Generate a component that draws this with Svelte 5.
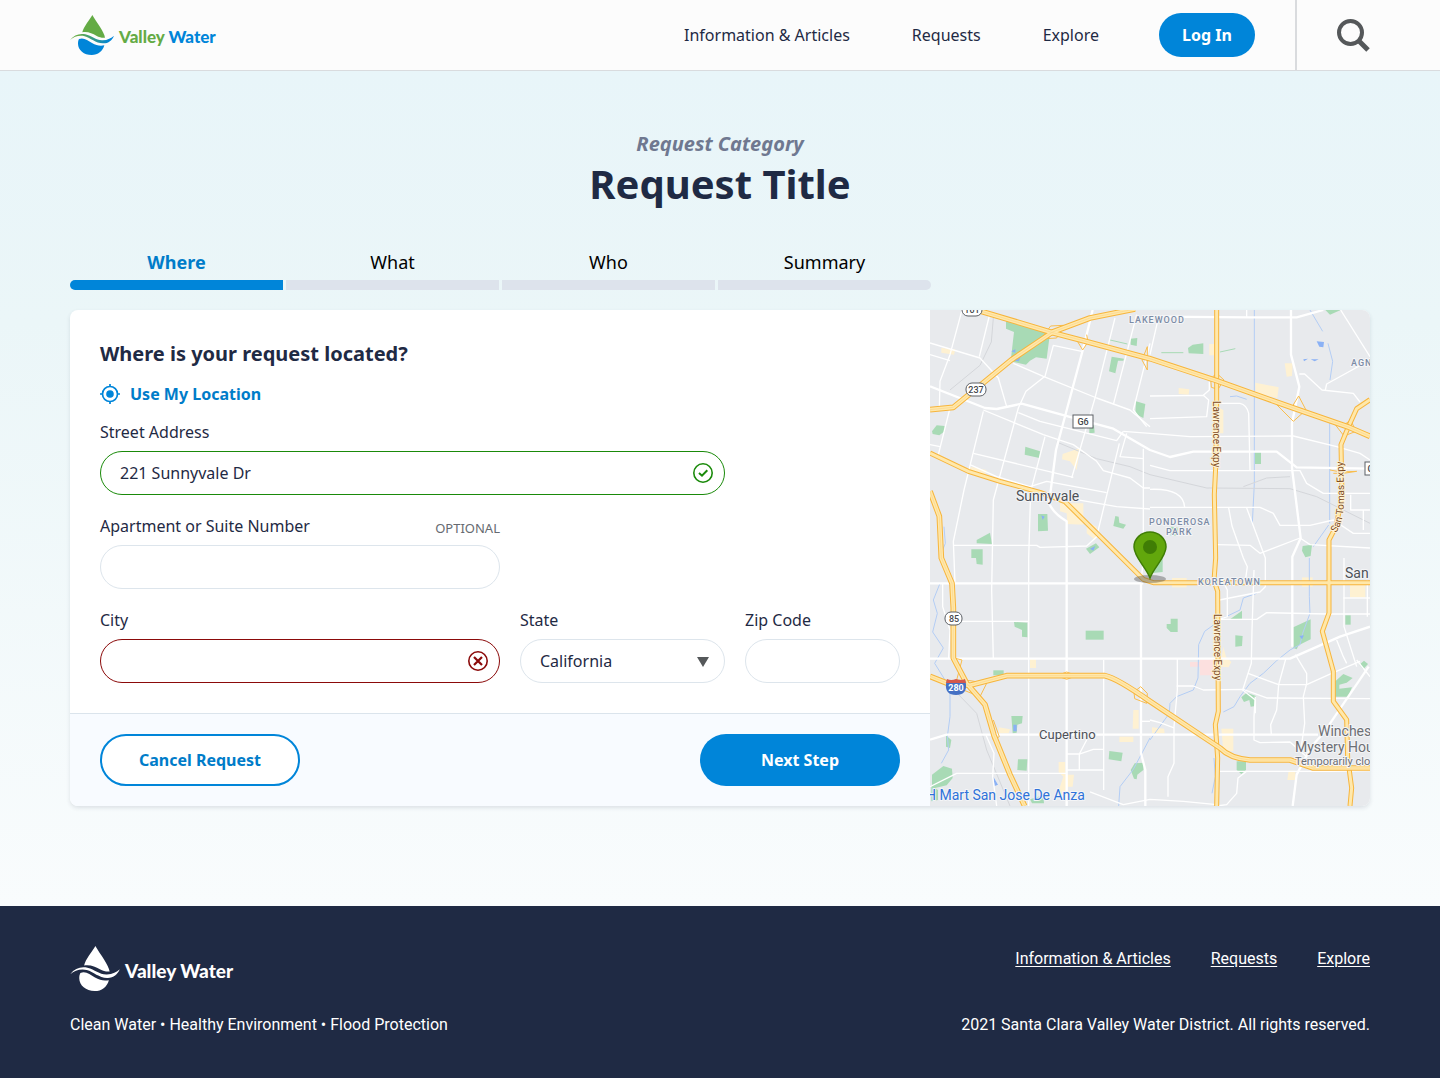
<script>
    const navLinks = ["Information & Articles", "Requests", "Explore"];
    const steps = ["Where", "What", "Who", "Summary"];
    const states = ["California", "Nevada", "Oregon"];

    let current = $state(0);
    let street = $state("221 Sunnyvale Dr");
    let suite = $state("");
    let city = $state("");
    let region = $state("California");
    let zip = $state("");

    // map shapes are on a 1320 x 1488 grid
    const parks = [
        "M228 34 L360 70 L350 146 L318 142 L300 152 L288 164 L242 154 L252 66 L228 56Z",
        "M545 140 L582 146 L580 152 L564 152 L556 190 L537 184Z",
        "M602 86 L622 84 L620 108 L602 104Z",
        "M286 410 L330 424 L328 444 L284 434Z",
        "M618 274 L646 282 L640 324 L616 312Z",
        "M6 364 L20 346 L44 348 L44 364 L28 376 L8 372Z",
        "M478 350 L492 346 L494 368 L478 370Z",
        "M324 612 L352 612 L354 662 L324 664Z",
        "M556 618 L566 620 L568 638 L588 644 L580 656 L550 648Z",
        "M140 690 L180 668 L186 702 L140 700Z",
        "M124 718 L158 718 L158 744 L158 764 L140 762 L138 744 L124 744Z",
        "M468 716 L498 700 L508 712 L480 732Z",
        "M252 936 L292 938 L292 982 L276 980 L276 960 L254 950Z",
        "M467 962 H521 V989 H467Z",
        "M190 1081 H221 V1096 H190Z",
        "M244 1218 H278 L276 1240 L262 1244 L260 1268 L248 1270Z",
        "M264 1348 L292 1348 L290 1382 L262 1380Z",
        "M538 1323 L578 1328 L574 1354 L536 1348Z",
        "M614 1360 L642 1358 L640 1380 L622 1394 L620 1408 L612 1406 L602 1380Z",
        "M6 1394 L40 1368 L66 1376 L68 1404 L50 1426 L6 1436Z",
        "M48 1276 L64 1290 L60 1314 L48 1310Z",
        "M4 1426 L24 1440 L24 1470 L4 1474Z",
        "M300 1468 L340 1456 L342 1480 L306 1480Z",
        "M774 114 L788 104 L820 100 L820 132 L776 130Z",
        "M975 426 H993 V462 H975Z",
        "M1186 0 H1232 L1200 14Z",
        "M1118 708 L1146 704 L1142 738 L1126 742 L1116 722Z",
        "M722 926 H743 V966 H722 L710 954 V942 H722Z",
        "M916 976 L938 978 L936 1008 L916 1010Z",
        "M1090 952 L1142 928 V988 L1106 1006 L1100 1018 L1090 1014Z",
        "M900 928 L936 902 L936 926Z",
        "M1246 916 H1262 V944 H1246Z",
        "M934 1162 L950 1148 L978 1158 L976 1188 L962 1190 L958 1170 L942 1176Z",
        "M1288 1064 L1302 1052 L1314 1062 L1300 1078Z",
        "M1216 1114 L1240 1092 L1268 1104 L1250 1118 L1228 1124 L1228 1136 L1266 1132 L1254 1160 L1216 1160Z",
        "M920 1354 H948 V1380 L934 1392 L920 1380Z",
        "M660 744 H698 V786 L660 790Z",
        "M722 650 L742 652 L746 676 L722 678Z",
    ];

    const blocks = [
        "M34 114 L76 118 L72 134 L34 128Z",
        "M398 432 L450 414 L440 480 L420 454 L396 448Z",
        "M390 580 L460 580 L460 644 L412 642 L410 610 L390 604Z",
        "M470 636 L500 650 L496 690 L470 670Z",
        "M120 470 L170 480 L166 492 L124 490Z",
        "M206 1252 L240 1258 L236 1270 L206 1270Z",
        "M300 1046 H318 V1074 H300Z",
        "M610 1200 H626 V1256 H608Z",
        "M568 1280 H610 V1296 H568Z",
        "M386 1356 H406 V1394 H432 L428 1430 H414 L412 1470 H390 V1430 L400 1400 L386 1386Z",
        "M838 102 H856 V136 H838Z",
        "M976 218 L1046 232 L1042 264 L976 248Z",
        "M1064 160 L1088 160 L1086 198 L1070 200Z",
        "M746 234 L778 238 L776 254 L746 252Z",
        "M868 294 L880 300 L880 370 L868 370Z",
        "M1260 824 H1306 V862 H1260Z",
        "M880 1010 L888 1040 L904 1056 L896 1072 L870 1070Z",
        "M874 1256 H910 V1324 H880Z",
        "M1076 1382 H1096 V1410 H1072Z",
        "M666 1252 L702 1256 L704 1270 L666 1270Z",
        "M726 804 H770 V832 H726Z",
        "M1116 802 H1148 V830 H1116Z",
    ];

    const water = [
        "M973 0 V520 L967 640",
        "M1199 340 V640",
        "M1140 0 L1178 64",
        "M1194 100 L1208 154 L1200 210",
        "M900 260 L920 258 L950 268",
        "M1138 744 V860 L1140 910 L1118 970 L1110 1004 L1080 1020 L1040 1052 L1000 1090 L960 1120 L930 1160 L912 1190 L880 1206",
        "M980 850 L940 864 L930 900 L880 924 L824 964 L806 1004 L804 1104 L790 1140 L740 1160 L720 1180 L718 1210 L660 1290",
        "M30 820 L10 870 L22 910 L8 966 L40 1014 L14 1060 L60 1134 L60 1220 L52 1280 L56 1320 L34 1360",
        "M660 1284 L610 1378 L570 1430 L566 1488",
        "M42 650 L46 700 L30 740",
        "M1196 645 L1150 710",
        "M852 1344 L856 1400 L846 1450",
    ];

    const rails = [
        "M190 24 L184 96 L150 166 L60 240",
        "M380 396 L500 446 L600 470 L660 494 L830 534 L1080 536 L1160 560 L1320 640",
        "M940 530 L1010 504 L1080 500",
        "M80 1148 L140 1210 L170 1320 L240 1488",
    ];

    const streets = [
        "M96 0 L60 134 L30 214 L28 300",
        "M180 9 L148 140",
        "M0 99 L150 144 L205 204 L230 290",
        "M0 134 L60 152",
        "M60 294 L25 434",
        "M0 404 L30 410",
        "M160 304 L102 540 L70 694 L75 820",
        "M250 160 L340 199 L500 264 L600 300 L660 350",
        "M455 124 L370 106 L345 199 L288 244 L265 294 L190 570 L185 840 L190 1046",
        "M555 24 L495 264 L425 504",
        "M620 14 L550 284",
        "M660 100 L610 300 L650 350",
        "M160 300 L340 374 L430 404 L500 454 L520 482 L600 504 L640 534 H660",
        "M345 380 L302 544 L296 744 V1488",
        "M130 430 L430 502",
        "M120 464 L200 500 L300 530 L350 514 L530 548",
        "M265 308 L330 334 L560 392 L580 364",
        "M590 370 L570 440 L640 446",
        "M568 400 L500 680 L470 708 L330 712 L320 706 H70",
        "M440 569 L560 590 L660 597",
        "M640 416 V744 L633 820",
        "M580 364 L660 370 L780 380 L1090 378 L1220 410 L1290 430 L1320 450",
        "M95 934 H296",
        "M38 820 V890 L60 960 L56 1046",
        "M521 1050 V1440",
        "M410 1332 H450 L490 1318 H521",
        "M448 1380 V1332 L470 1290",
        "M410 1380 H521",
        "M0 1430 L80 1390 H410",
        "M168 1276 L192 1330 L188 1400 L200 1488",
        "M480 1446 L580 1484 L660 1468 L760 1474 L860 1484",
        "M633 1234 H660",
        "M660 134 L686 20",
        "M660 258 L820 256 L836 270 L830 320 L660 326",
        "M820 256 L838 240 V216",
        "M860 280 H930 Q950 284 956 310 L960 480",
        "M660 466 L720 482 H1110 L1130 520 L1180 550 H1320",
        "M660 538 Q760 534 764 592",
        "M660 592 H990 L1030 610 L1050 646 H1140 L1210 630 L1270 670 H1320",
        "M950 594 L1006 744 V830 L990 846 L868 870",
        "M896 594 L906 648 L940 744 L952 770 L946 812",
        "M860 704 L960 706 L990 730 L1110 684 L1140 704 L1320 714",
        "M1108 192 L1124 192 L1176 240 L1270 250 L1290 276",
        "M1186 240 L1190 222 L1320 150",
        "M1232 0 L1320 140",
        "M950 0 V24",
        "M1262 554 V600 H1320",
        "M1300 600 V660",
        "M1242 744 V950 L1280 1070",
        "M1312 810 V920",
        "M1240 864 H1320",
        "M972 780 L966 960 L964 1060 L938 1140 L976 1170 V1210",
        "M870 928 H980 L1010 908 L1190 912 H1320",
        "M860 816 H880 L892 840 V920 L864 930",
        "M1068 1044 L1046 1124 L1040 1200 L1022 1244 L1024 1274",
        "M954 1090 L1046 1124 H1130 L1210 1088 L1290 1054",
        "M1096 1034 L1130 1090 V1120 L1120 1160 L1124 1240 L1114 1310",
        "M740 1128 H790 L820 1140 L940 1138 L1010 1164 L1320 1166",
        "M742 1046 V1140 L732 1250 V1360 L714 1400 V1460",
        "M976 1160 L972 1220 V1290 L990 1298 L1080 1296 L1130 1340",
        "M1220 990 L1240 1040 L1250 1060",
        "M1280 1050 L1320 1100",
        "M860 1384 H1200 L1320 1382",
        "M950 1384 L924 1404 L920 1450 L890 1484 L860 1488",
        "M660 1230 L690 1238 L732 1254",
    ];

    const avenues = [
        "M0 229 L165 294 L200 297 L275 281 L430 324 L550 356 L660 420 L720 441 L790 425 H1040 L1100 472 L1320 476",
        "M488 0 L460 114 L378 420 L357 580 Q370 610 410 634 V1488",
        "M680 20 L960 22 H1100 L1180 0",
        "M1083 0 V134 L1108 230 L1086 340 V474 L1112 684 L1087 740 V1010",
        "M0 820 H640",
        "M0 1046 H1080 L1230 980 L1320 950",
        "M0 1289 L50 1274 H1164",
        "M633 820 V1330 L646 1380 V1488",
        "M1316 1070 L1180 1270 L1144 1310 L1100 1394 L1088 1488",
    ];

    const expressways = [
        "M860 0 V274 L857 474 L853 554 L857 744 L852 812 L863 844 L865 1204 L856 1244 L863 1344 L860 1488",
        "M1320 269 L1280 296 L1255 351 L1233 404 L1236 560 L1218 650 L1197 690 V909 L1177 964 L1210 1084 V1174 L1250 1229 L1253 1344 L1265 1434 L1260 1488",
        "M0 429 L115 484 L210 514 L330 547 L405 575 L500 669 L640 808 L670 818 H1320",
    ];

    const freeways = [
        "M140 0 L368 68 L460 92 L660 146 L860 212 L1090 294 L1255 351 L1320 379",
        "M0 299 L70 292 L245 149 L368 66 L480 24 L615 -3",
        "M0 544 L28 619 L34 744 L66 820 L70 894 V1044 L110 1120 L165 1184 L192 1276 L240 1394 L284 1488",
        "M0 1099 L50 1119 L120 1126 L230 1097 H525 Q560 1104 660 1174 L870 1314 Q900 1345 960 1350 H1080 L1150 1374 H1320",
    ];

    const ramps = [
        "M338 80 L362 48 L400 46 L380 84 L346 86Z",
        "M440 90 L458 120 L474 96 L470 74",
        "M640 140 L652 110 L652 180 L636 150Z",
        "M842 206 L860 190 L882 210 L864 238 L844 232Z",
        "M1040 284 L1084 294 L1106 258 L1128 300 L1090 334Z",
        "M1208 334 L1246 342 L1262 330 L1278 364 L1242 378Z",
        "M1200 480 L1232 486 L1280 484 L1240 490 L1210 490",
        "M72 1044 L96 1050 L80 1110 L120 1112 L170 1120 L150 1160 L100 1140",
        "M380 1097 L410 1086 L440 1097 L410 1108Z",
        "M612 1146 L632 1130 L652 1150 L650 1180 L614 1166Z",
        "M182 1250 L190 1290 L208 1280 L190 1230",
    ];
</script>

{#snippet logoMark()}
    <path
        class="drop"
        d="M97 45 C90 58 70 81 67 97 C84 94 97 101 109 107 C118 112 127 114 135 113 C133 96 109 66 97 45Z"
    />
    <path
        class="wave"
        d="M30 120 C42 105 58 99 76 103 C96 108 108 122 128 121 C143 120 154 114 162 107 C156 121 146 130 130 130 C108 131 92 114 74 109 C58 105 42 110 30 120Z"
    />
    <path
        class="pool"
        d="M57 117 C71 111 83 121 96 129 C109 137 121 138 133 136 C128 154 114 165 95 165 C72 165 54 150 54 131 C54 125 55 121 57 117Z"
    />
{/snippet}

<header class="header">
    <div class="header-inner">
        <a class="logo" href="#home">
            <svg viewBox="30 45 132 120" width="44" height="40" aria-hidden="true">
                <defs>
                    <linearGradient id="wave-fill">
                        <stop offset="0.2" stop-color="#64ab45" />
                        <stop offset="0.9" stop-color="#0085d9" />
                    </linearGradient>
                </defs>
                {@render logoMark()}
            </svg>
            <span class="logo-text">Valley <span class="blue">Water</span></span>
        </a>
        <nav class="nav">
            {#each navLinks as link}
                <a href="#{link}">{link}</a>
            {/each}
        </nav>
        <button class="btn login">Log In</button>
        <button class="search" aria-label="Search">
            <svg viewBox="0 0 33 33" width="33" height="33">
                <circle cx="13.5" cy="13.5" r="11.5" fill="none" stroke="#55585a" stroke-width="4" />
                <path d="M21.5 21.5 L31 31" stroke="#55585a" stroke-width="5" />
            </svg>
        </button>
    </div>
</header>

<main class="main">
    <p class="category">Request Category</p>
    <h1>Request Title</h1>

    <ol class="steps">
        {#each steps as step, i}
            <li class:active={i === current}>
                <button onclick={() => (current = i)}>{step}</button>
                <div class="bar"></div>
            </li>
        {/each}
    </ol>

    <div class="card">
        <form class="form" onsubmit={(e) => e.preventDefault()}>
            <div class="fields">
                <h2>Where is your request located?</h2>
                <button type="button" class="locate">
                    <svg viewBox="0 0 20 20" width="20" height="20" aria-hidden="true">
                        <circle cx="10" cy="10" r="7.5" fill="none" stroke="#0085d9" stroke-width="1.7" />
                        <circle cx="10" cy="10" r="3.8" fill="#0085d9" />
                        <path d="M10 0V3M10 17V20M0 10H3M17 10H20" stroke="#0085d9" stroke-width="1.7" />
                    </svg>
                    Use My Location
                </button>

                <div class="grid">
                    <div class="field street">
                        <label for="street">Street Address</label>
                        <div class="control">
                            <input id="street" class="valid" bind:value={street} />
                            <svg class="status" viewBox="0 0 20 20" width="20" height="20" aria-hidden="true">
                                <circle cx="10" cy="10" r="9.2" fill="none" stroke="#1a8a0a" stroke-width="1.6" />
                                <path d="M6 10 L9 12.7 L14.3 7.3" fill="none" stroke="#1a8a0a" stroke-width="2" />
                            </svg>
                        </div>
                    </div>

                    <div class="field suite">
                        <div class="label-row">
                            <label for="suite">Apartment or Suite Number</label>
                            <span class="optional">OPTIONAL</span>
                        </div>
                        <input id="suite" bind:value={suite} />
                    </div>

                    <div class="field city">
                        <label for="city">City</label>
                        <div class="control">
                            <input id="city" class="invalid" bind:value={city} />
                            <svg class="status" viewBox="0 0 20 20" width="20" height="20" aria-hidden="true">
                                <circle cx="10" cy="10" r="9.2" fill="none" stroke="#8b0a0a" stroke-width="1.6" />
                                <path d="M6 6 L14 14 M14 6 L6 14" stroke="#8b0a0a" stroke-width="2.2" />
                            </svg>
                        </div>
                    </div>
                    <div class="field">
                        <label for="state">State</label>
                        <div class="control">
                            <select id="state" bind:value={region}>
                                {#each states as name}
                                    <option>{name}</option>
                                {/each}
                            </select>
                            <svg class="status" viewBox="0 0 20 20" width="20" height="20" aria-hidden="true">
                                <path d="M4 6 H16 L10 16Z" fill="#55585a" />
                            </svg>
                        </div>
                    </div>
                    <div class="field">
                        <label for="zip">Zip Code</label>
                        <input id="zip" bind:value={zip} />
                    </div>
                </div>
            </div>
            <div class="actions">
                <button type="button" class="btn outline">Cancel Request</button>
                <button type="submit" class="btn">Next Step</button>
            </div>
        </form>

        <div class="map">
            <svg viewBox="0 0 440 496" preserveAspectRatio="xMidYMid slice" role="img" aria-label="Map of Sunnyvale">
                <g transform="scale(0.33333)" fill="none" stroke-linejoin="round">
                    {#each parks as d}<path class="park" {d} />{/each}
                    {#each blocks as d}<path class="block" {d} />{/each}
                    <path class="hospital" d="M780 1056 H810 V1048 H852 V1096 H810 V1070 H780Z" />
                    <path class="trail" d="M540 90 L592 102 M694 128 H760 M870 126 L916 116" />
                    {#each water as d}<path class="water" {d} />{/each}
                    <path
                        class="pond"
                        d="M258 142 L272 140 L266 154 L254 152Z M244 124 L256 118 L256 128Z M334 616 L344 620 L338 630Z M480 716 L496 708 L490 722Z M1160 94 L1182 96 L1180 112 L1168 110Z M1120 148 L1134 146 L1122 154Z M1142 148 L1166 148 L1154 154Z M250 1244 H260 V1264 H250Z M190 1400 L204 1424 L194 1428Z M1108 978 L1122 976 L1116 988Z"
                    />
                    {#each rails as d}<path class="rail" {d} />{/each}
                    {#each streets as d}<path class="street-line" {d} />{/each}
                    {#each avenues as d}<path class="avenue" {d} />{/each}
                    {#each ramps as d}<path class="ramp" {d} />{/each}
                    {#each expressways as d}<path class="casing" {d} />{/each}
                    {#each expressways as d}<path class="lane" {d} />{/each}
                    {#each freeways as d}<path class="casing wide" {d} />{/each}
                    {#each freeways as d}<path class="lane wide" {d} />{/each}
                    {#each freeways as d}<path class="median" {d} />{/each}
                </g>

                <g class="shield">
                    <rect x="32" y="-7" width="20" height="13" rx="6" />
                    <rect x="36" y="73" width="20" height="13" rx="6" />
                    <rect x="15" y="302" width="17" height="13" rx="6" />
                    <rect x="143" y="105" width="20" height="13" />
                    <rect x="435" y="152" width="20" height="13" />
                    <text x="42" y="3">101</text>
                    <text x="46" y="83">237</text>
                    <text x="24" y="312">85</text>
                    <text x="153" y="115">G6</text>
                    <text x="443" y="162">G4</text>
                </g>
                <path d="M16 374 Q15 385 26 385 Q37 385 36 374 L35 370 H17Z" fill="#4470c4" />
                <path d="M17 369 Q21 371 26 369 Q31 371 35 369 L36 373 H16Z" fill="#d5584c" />
                <text class="interstate" x="26" y="381">280</text>

                <g class="area">
                    <text x="199" y="13">LAKEWOOD</text>
                    <text x="421" y="56">AGN</text>
                    <text x="219" y="215">PONDEROSA</text>
                    <text x="236" y="225">PARK</text>
                    <text x="268" y="275">KOREATOWN</text>
                </g>
                <g class="place">
                    <text class="big" x="86" y="191">Sunnyvale</text>
                    <text class="big" x="415" y="268">San</text>
                    <text x="109" y="429">Cupertino</text>
                </g>
                <g class="poi">
                    <text x="388" y="426">Winches</text>
                    <text x="365" y="442">Mystery Hou</text>
                    <text class="small" x="365" y="455">Temporarily clo</text>
                    <text class="shop" x="-4" y="490">H Mart San Jose De Anza</text>
                </g>
                <g class="road-name">
                    <path id="san-tomas" d="M406 223 C415 210 415 195 413 150" fill="none" />
                    <text transform="translate(283 91) rotate(90)">Lawrence Expy</text>
                    <text transform="translate(284 304) rotate(90)">Lawrence Expy</text>
                    <text><textPath href="#san-tomas">San Tomas Expy</textPath></text>
                </g>

                <ellipse cx="220" cy="269" rx="16" ry="4" fill="#4c4c4c" fill-opacity="0.4" />
                <path
                    d="M220 268 C216 257 204 247 204 237 A16 15 0 0 1 236 237 C236 247 224 257 220 268Z"
                    fill="#62a70c"
                    stroke="#3f7d05"
                    stroke-width="1.5"
                />
                <circle cx="220" cy="237" r="7" fill="#3f7d05" />
            </svg>
        </div>
    </div>
</main>

<footer class="footer">
    <div class="footer-row">
        <a class="logo light" href="#home">
            <svg viewBox="30 45 132 120" width="50" height="45" aria-hidden="true">
                {@render logoMark()}
            </svg>
            <span class="logo-text">Valley Water</span>
        </a>
        <nav class="footer-nav">
            {#each navLinks as link}
                <a href="#{link}">{link}</a>
            {/each}
        </nav>
    </div>
    <div class="footer-row">
        <p>Clean Water • Healthy Environment • Flood Protection</p>
        <p>2021 Santa Clara Valley Water District. All rights reserved.</p>
    </div>
</footer>

<style>
    :global(body) {
        margin: 0;
        font-family: "Noto Sans", sans-serif;
        font-size: 16px;
        line-height: 22px;
        color: #1f2a44;
        background: #1f2a44;
    }

    h1,
    h2,
    p,
    ol {
        margin: 0;
        padding: 0;
    }

    button,
    input,
    select {
        font: inherit;
        color: inherit;
        box-sizing: border-box;
    }

    button {
        padding: 0;
        border: none;
        background: none;
        cursor: pointer;
    }

    svg {
        display: block;
    }

    .header {
        background: #fcfcfc;
        border-bottom: 1px solid #d9dbde;
    }

    .header-inner {
        display: flex;
        align-items: center;
        height: 70px;
        padding: 0 70px;
    }

    .logo {
        display: flex;
        align-items: center;
        gap: 5px;
        margin-right: auto;
        text-decoration: none;
        color: #64ab45;
    }

    .logo-text {
        font-family: Lato, sans-serif;
        font-size: 17px;
        font-weight: 900;
        white-space: nowrap;
        padding-top: 4px;
    }

    .blue {
        color: #0085d9;
    }

    .drop {
        fill: #64ab45;
    }

    .wave {
        fill: url(#wave-fill);
    }

    .pool {
        fill: #0085d9;
    }

    .light {
        color: #fff;
    }

    .light path {
        fill: #fff;
    }

    .light .logo-text {
        font-size: 19px;
    }

    .nav {
        display: flex;
        gap: 62px;
    }

    .nav a {
        color: #1f2a44;
        text-decoration: none;
    }

    .btn {
        width: 200px;
        height: 52px;
        border-radius: 26px;
        background: #0085d9;
        color: #fff;
        font-weight: 700;
    }

    .login {
        width: 96px;
        height: 44px;
        margin: 0 40px 0 60px;
    }

    .outline {
        border: 2px solid #0085d9;
        background: #fff;
        color: #007cc9;
    }

    .search {
        align-self: stretch;
        padding-left: 40px;
        border-left: 2px solid #d9dbde;
    }

    .main {
        padding: 59px 70px 100px;
        background: linear-gradient(#e8f5f9, #ebf6f8 30%, #f9fcfd);
    }

    .category {
        font-size: 20px;
        line-height: 28px;
        font-style: italic;
        font-weight: 700;
        text-align: center;
        color: #6f7890;
    }

    h1 {
        font-size: 40px;
        line-height: 52px;
        font-weight: 700;
        text-align: center;
    }

    .steps {
        display: flex;
        gap: 3px;
        width: calc(100% - 439px);
        margin: 40px 0 20px;
        list-style: none;
    }

    .steps li {
        flex: 1;
    }

    .bar {
        height: 10px;
        background: #dde3ec;
    }

    .steps li:first-child .bar {
        border-radius: 5px 0 0 5px;
    }

    .steps li:last-child .bar {
        border-radius: 0 5px 5px 0;
    }

    .steps button {
        display: block;
        width: 100%;
        height: 30px;
        padding-bottom: 6px;
        font-size: 18px;
        line-height: 24px;
        color: #000;
    }

    .steps .active .bar {
        background: #0085d9;
    }

    .steps .active button {
        font-weight: 700;
        color: #007cc9;
    }

    .card {
        display: grid;
        grid-template-columns: 1fr 440px;
        border-radius: 8px;
        overflow: hidden;
        background: #fff;
        box-shadow: 0 2px 4px rgba(31, 42, 68, 0.12);
    }

    .fields {
        padding: 30px;
    }

    h2 {
        font-size: 20px;
        line-height: 28px;
        font-weight: 700;
    }

    .locate {
        display: flex;
        align-items: center;
        gap: 10px;
        margin: 15px 0 16px;
        font-weight: 700;
        color: #007cc9;
    }

    .grid {
        display: grid;
        grid-template-columns: 400fr 205fr 155fr;
        gap: 20px;
    }

    .field {
        display: flex;
        flex-direction: column;
        gap: 8px;
    }

    .street {
        grid-column: 1 / 3;
    }

    .suite {
        grid-column: 1;
    }

    .city {
        grid-column: 1;
    }

    .label-row {
        display: flex;
        justify-content: space-between;
        align-items: flex-end;
    }

    .optional {
        font-size: 13px;
        line-height: 18px;
        color: #666a70;
    }

    .control {
        position: relative;
    }

    input,
    select {
        display: block;
        width: 100%;
        height: 44px;
        padding: 0 19px;
        border: 1px solid #dde5ec;
        border-radius: 22px;
        background: #fff;
        appearance: none;
    }

    .valid {
        border-color: #1a8a0a;
    }

    .invalid {
        border-color: #8b0a0a;
    }

    .status {
        position: absolute;
        top: 12px;
        right: 12px;
        pointer-events: none;
    }

    .actions {
        display: flex;
        justify-content: space-between;
        padding: 20px 30px;
        border-top: 1px solid #dbe4ec;
        background: #f8fbff;
    }

    .map {
        position: relative;
        background: #e8eaed;
    }

    .map svg {
        position: absolute;
        width: 100%;
        height: 100%;
    }

    .park {
        fill: #a8dab5;
    }

    .block {
        fill: #fef1d2;
    }

    .hospital {
        fill: #fce0df;
    }

    .trail {
        stroke: #a8dab5;
        stroke-width: 3;
    }

    .water {
        stroke: #b3cdf5;
        stroke-width: 3;
    }

    .pond {
        fill: #8ab1f5;
    }

    .rail {
        stroke: #d4d6da;
        stroke-width: 3;
    }

    .street-line {
        stroke: #fff;
        stroke-width: 4;
    }

    .avenue {
        stroke: #fff;
        stroke-width: 7;
    }

    .ramp {
        stroke: #f9bd4c;
        stroke-width: 3;
    }

    .casing {
        stroke: #f7b53c;
        stroke-width: 15;
    }

    .casing.wide {
        stroke-width: 17;
    }

    .lane {
        stroke: #ffe8ab;
        stroke-width: 9;
    }

    .lane.wide {
        stroke-width: 11;
    }

    .median {
        stroke: #fbd58a;
        stroke-width: 2;
    }

    .map text {
        font-family: Roboto, sans-serif;
        paint-order: stroke;
        stroke: #f4f5f7;
        stroke-width: 2px;
        stroke-linejoin: round;
    }

    .shield rect {
        fill: #fff;
        stroke: #5c6066;
    }

    .map .shield text,
    .map .interstate {
        font-size: 9px;
        font-weight: 500;
        text-anchor: middle;
        fill: #44474c;
        stroke: none;
    }

    .map .interstate {
        font-weight: 700;
        fill: #fff;
    }

    .area text {
        font-size: 9px;
        font-weight: 500;
        letter-spacing: 1px;
        fill: #7b8ba5;
    }

    .place text {
        font-size: 13px;
        fill: #4e5157;
    }

    .place .big {
        font-size: 14px;
    }

    .poi text {
        font-size: 14px;
        fill: #6d6f74;
    }

    .poi .small {
        font-size: 11px;
    }

    .poi .shop {
        fill: #2f72d9;
    }

    .road-name text {
        font-size: 10px;
        fill: #7d4a1c;
        stroke: #fff3d6;
    }

    .footer {
        padding: 40px 70px 42px;
        background: #1f2a44;
        color: #fff;
        font-family: Roboto, sans-serif;
    }

    .footer-row {
        display: flex;
        justify-content: space-between;
    }

    .footer-row + .footer-row {
        margin-top: 23px;
    }

    .footer-nav {
        display: flex;
        gap: 40px;
        padding-top: 2px;
    }

    .footer-nav a {
        color: inherit;
        text-underline-offset: 2px;
    }
</style>
